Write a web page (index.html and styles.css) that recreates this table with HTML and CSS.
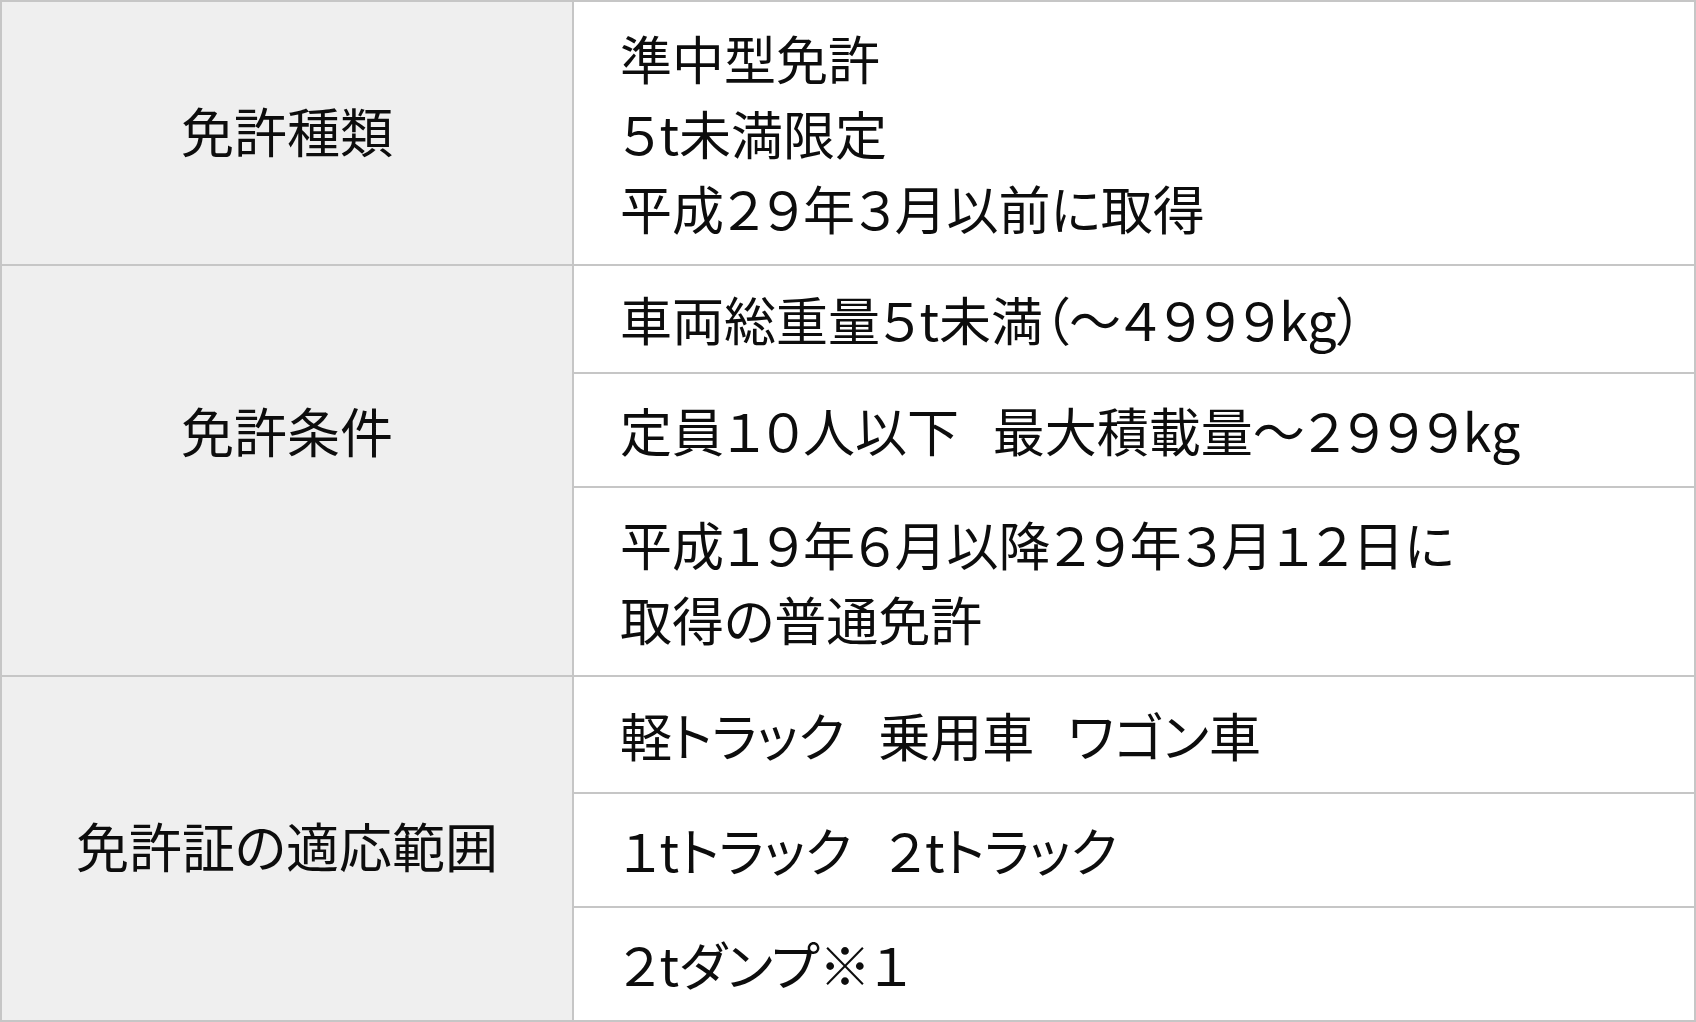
FILE: index.html
```html
<!DOCTYPE html>
<html lang="ja">
<head>
<meta charset="utf-8">
<title>免許</title>
<link rel="stylesheet" href="styles.css">
</head>
<body>
<div class="spec">
  <section class="group">
    <div class="head">免許種類</div>
    <div class="cells">
      <div class="cell">準中型免許<br>５t未満限定<br>平成２９年３月以前に取得</div>
    </div>
  </section>
  <section class="group">
    <div class="head head-raised">免許条件</div>
    <div class="cells">
      <div class="cell cell-tight">車両総重量５t未満（～４９９９kg）</div>
      <div class="cell">定員１０人以下 最大積載量～２９９９kg</div>
      <div class="cell">平成１９年６月以降２９年３月１２日に<br>取得の普通免許</div>
    </div>
  </section>
  <section class="group">
    <div class="head">免許証の適応範囲</div>
    <div class="cells">
      <div class="cell cell-loose">軽トラック 乗用車 ワゴン車</div>
      <div class="cell">１tトラック ２tトラック</div>
      <div class="cell">２tダンプ※１</div>
    </div>
  </section>
</div>
</body>
</html>
```

FILE: styles.css
```css
html, body {
  margin: 0;
  padding: 0;
  background: #ffffff;
}

.spec {
  width: 1696px;
  box-sizing: border-box;
  border: 2px solid #c6c6c6;
  border-bottom-width: 3px;
  font-family: "Noto Sans CJK JP", "Noto Sans", sans-serif;
  font-feature-settings: "palt";
  color: #0d0d0d;
}

.group {
  display: grid;
  grid-template-columns: 572px 1fr;
  border-bottom: 2px solid #c6c6c6;
}

.group:last-child {
  border-bottom: none;
}

.head {
  background: #efefef;
  border-right: 2px solid #c6c6c6;
  display: flex;
  align-items: center;
  justify-content: center;
  padding-bottom: 6px;
  font-size: 53px;
  line-height: 75px;
}

.head-raised {
  padding-bottom: 81px;
}

.cells {
  display: flex;
  flex-direction: column;
}

.cell {
  padding: 18px 0 19px 46px;
  font-size: 52px;
  line-height: 75px;
  word-spacing: 22px;
  border-bottom: 2px solid #c6c6c6;
  white-space: nowrap;
}

.cell:last-child {
  border-bottom: none;
}

.cell-tight {
  padding-top: 15px;
  padding-bottom: 16px;
}

.cell-loose {
  padding-top: 20px;
  padding-bottom: 20px;
}
```
